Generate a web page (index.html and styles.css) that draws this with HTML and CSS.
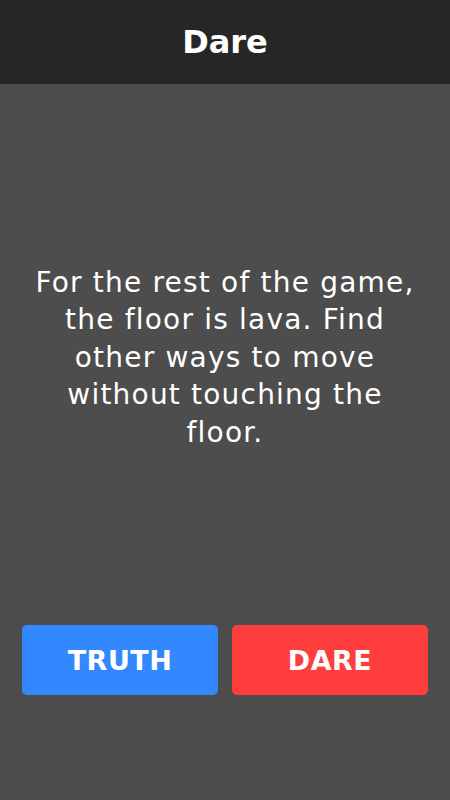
FILE: index.html
```html
<!DOCTYPE html>
<html>
<head>
<meta charset="utf-8">
<link rel="stylesheet" href="styles.css">
</head>
<body>
<div class="app">
  <header class="topbar"><h1 class="title">Dare</h1></header>
  <main class="content">
    <p class="prompt">For the rest of the game, the floor is lava. Find other ways to move without touching the floor.</p>
  </main>
  <div class="actions">
    <button class="btn btn-truth">TRUTH</button>
    <button class="btn btn-dare">DARE</button>
  </div>
</div>
</body>
</html>
```
FILE: styles.css
```css
* { box-sizing: border-box; }
html, body { margin: 0; padding: 0; }
body {
  width: 450px;
  height: 800px;
  background: #4d4d4d;
  font-family: "DejaVu Sans", "Noto Sans", sans-serif;
  color: #ffffff;
}
.app {
  display: flex;
  flex-direction: column;
  height: 800px;
}
.topbar {
  height: 84px;
  background: #262626;
  display: flex;
  align-items: center;
  justify-content: center;
}
.title {
  margin: 0;
  font-size: 32px;
  font-weight: bold;
  color: #ffffff;
}
.content {
  flex: 1;
  display: flex;
  align-items: center;
  justify-content: center;
  padding: 6px 25px 0;
}
.prompt {
  margin: 0;
  text-align: center;
  font-size: 28px;
  letter-spacing: 1.2px;
  line-height: 37.5px;
}
.actions {
  display: flex;
  gap: 14px;
  padding: 0 22px;
  margin-bottom: 105px;
}
.btn {
  flex: 1;
  height: 70px;
  border: none;
  border-radius: 5px;
  color: #ffffff;
  font-family: "DejaVu Sans", "Noto Sans", sans-serif;
  font-weight: bold;
  font-size: 27px;
  letter-spacing: 0.5px;
  padding: 0;
}
.btn-truth { background: #3388ff; }
.btn-dare { background: #ff3d3d; }
```
